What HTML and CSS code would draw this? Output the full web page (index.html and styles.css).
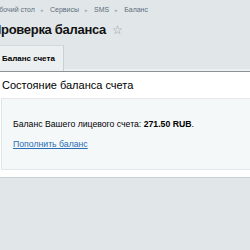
FILE: index.html
```html
<!DOCTYPE html>
<html lang="ru">
<head>
<meta charset="utf-8">
<title>Проверка баланса</title>
<link rel="stylesheet" href="styles.css">
</head>
<body>

<div class="top">
	<div class="crumbs">
		<a href="">Рабочий стол</a><span class="sep">&#9656;</span><a href="">Сервисы</a><span class="sep">&#9656;</span><a href="">SMS</a><span class="sep">&#9656;</span><a href="">Баланс</a>
	</div>
	<h1 class="title">Проверка баланса <span class="star">&#9734;</span></h1>
	<div class="tabs">
		<div class="tab active">Баланс счета</div>
	</div>
</div>

<div class="panel">
	<div class="panel-head">Состояние баланса счета</div>
	<div class="panel-body">
		<p class="balance">Баланс Вашего лицевого счета: <b>271.50 RUB</b>.</p>
		<a class="refill" href="">Пополнить баланс</a>
	</div>
</div>

</body>
</html>
```

FILE: styles.css
```css
body {
	margin : 0 ;
	background : #e1e7e9 ;
	font-family : "Liberation Sans", Arial, sans-serif ;
	color : #000 ;
	overflow : hidden ;
	}
.top {
	padding-top : 5px ;
	}
.crumbs {
	margin-left : -9px ;
	font-size : 7px ;
	line-height : 10px ;
	white-space : nowrap ;
	}
.crumbs a {
	color : #5d6b7a ;
	text-decoration : none ;
	}
.crumbs .sep {
	color : #9aa4ab ;
	font-size : 5px ;
	margin : 0 6px ;
	}
.title {
	margin : 6px 0 0 -8px ;
	font-size : 13px ;
	line-height : 17px ;
	letter-spacing : -0.3px ;
	font-weight : bold ;
	color : #111 ;
	white-space : nowrap ;
	}
.star {
	color : #8e979c ;
	font-weight : normal ;
	font-size : 12px ;
	margin-left : 3px ;
	}
.tabs {
	display : flex ;
	margin-top : 6px ;
	border-bottom : 1px solid #8b9396 ;
	box-shadow : 0 -2px 0 #edf0f1 inset ;
	}
.tab {
	margin-left : -4px ;
	padding : 0 8px 0 6px ;
	height : 25px ;
	line-height : 25px ;
	font-size : 8px ;
	font-weight : bold ;
	background : #eceff0 ;
	border-right : 1px solid #c9d0d3 ;
	border-top : 1px solid #d3d9dc ;
	}
.panel {
	background : #fff ;
	padding : 0 0 7px 1px ;
	border-bottom : 1px solid #c9d1d4 ;
	}
.panel-head {
	font-size : 11px ;
	line-height : 13px ;
	padding : 7px 2px 6px 1px ;
	border-bottom : 1px solid #e4e8ea ;
	}
.panel-body {
	background : #f5f8f9 ;
	border-left : 1px solid #e0e5e7 ;
	border-bottom : 1px solid #e4e8ea ;
	padding : 19px 11px 19px ;
	font-size : 8.7px ;
	line-height : 12px ;
	}
.balance {
	margin : 0 0 8px ;
	}
.refill {
	color : #2a6db4 ;
	}
```
